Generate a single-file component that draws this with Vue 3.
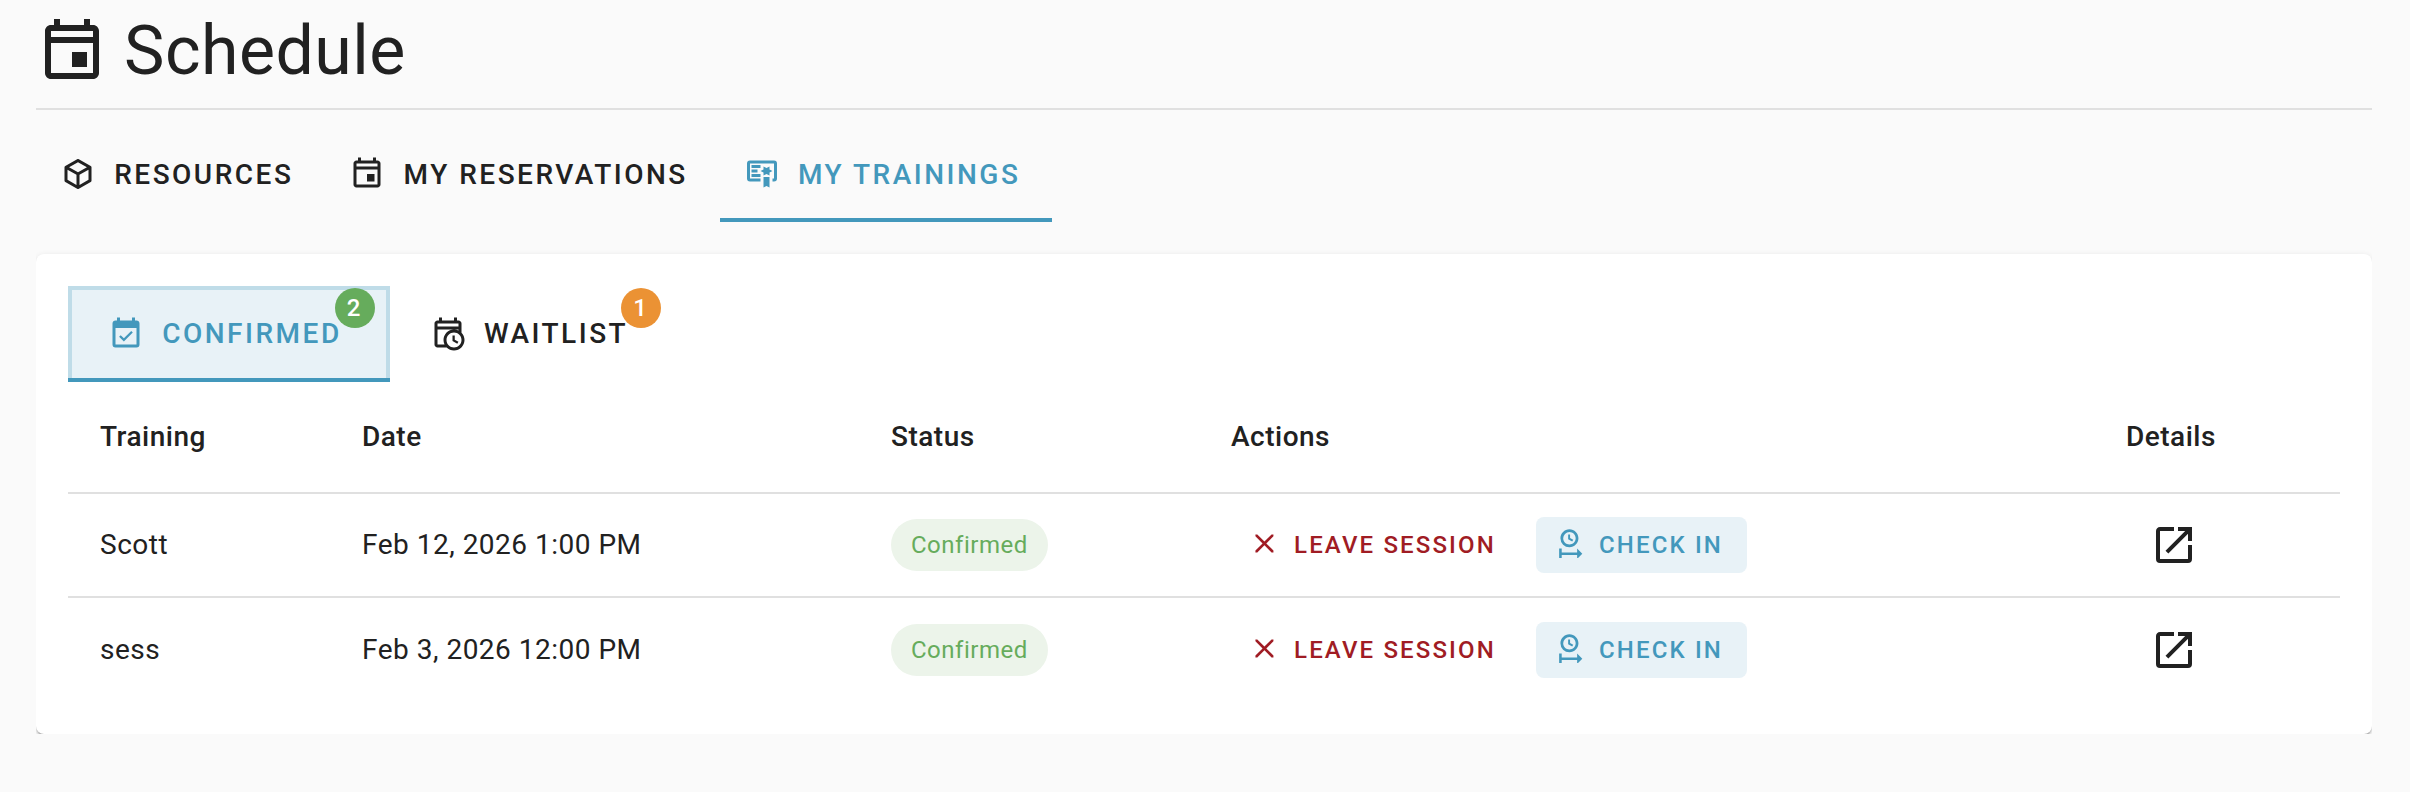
<template>
  <div class="page">
    <header class="page-header">
      <svg class="page-icon" viewBox="0 0 24 24"><path :d="icons.calendar" /></svg>
      <h1>Schedule</h1>
    </header>

    <nav class="tabs">
      <button v-for="tab in tabs" :key="tab.label" class="tab" :class="{ active: tab.active }">
        <svg viewBox="0 0 24 24"><path :d="icons[tab.icon]" /></svg>
        <span>{{ tab.label }}</span>
      </button>
    </nav>

    <div class="card-wrap">
      <section class="card">
        <div class="sub-tabs">
          <button
            v-for="tab in subTabs"
            :key="tab.label"
            class="tab sub-tab"
            :class="{ active: tab.active }"
          >
            <svg viewBox="0 0 24 24"><path :d="icons[tab.icon]" /></svg>
            <span class="badge-anchor">
              {{ tab.label }}
              <span class="badge" :class="tab.color">{{ tab.count }}</span>
            </span>
          </button>
        </div>

        <table>
          <colgroup>
            <col class="col-training" />
            <col class="col-date" />
            <col class="col-status" />
            <col class="col-actions" />
            <col class="col-details" />
          </colgroup>
          <thead>
            <tr>
              <th v-for="header in headers" :key="header">{{ header }}</th>
            </tr>
          </thead>
          <tbody>
            <tr v-for="item in trainings" :key="item.name">
              <td class="text-cell">{{ item.name }}</td>
              <td class="text-cell">{{ item.date }}</td>
              <td><span class="chip">{{ item.status }}</span></td>
              <td>
                <div class="actions">
                  <button class="btn btn-leave">
                    <svg viewBox="0 0 24 24"><path :d="icons.close" /></svg>
                    <span>LEAVE SESSION</span>
                  </button>
                  <button class="btn btn-checkin">
                    <svg viewBox="0 0 24 24"><path :d="icons.clockStart" /></svg>
                    <span>CHECK IN</span>
                  </button>
                </div>
              </td>
              <td>
                <button class="icon-btn" aria-label="Details">
                  <svg viewBox="0 0 24 24"><path :d="icons.openInNew" /></svg>
                </button>
              </td>
            </tr>
          </tbody>
        </table>
      </section>
    </div>
  </div>
</template>

<script setup>
const icons = {
  calendar: 'M12 12H17V17H12V12M19 3H18V1H16V3H8V1H6V3H5C3.89 3 3 3.9 3 5V19C3 20.1 3.89 21 5 21H19C20.11 21 21 20.1 21 19V5C21 3.9 20.11 3 19 3M19 5V7H5V5H19M5 19V9H19V19H5Z',
  cube: 'M21,16.5C21,16.88 20.79,17.21 20.47,17.38L12.57,21.82C12.41,21.94 12.21,22 12,22C11.79,22 11.59,21.94 11.43,21.82L3.53,17.38C3.21,17.21 3,16.88 3,16.5V7.5C3,7.12 3.21,6.79 3.53,6.62L11.43,2.18C11.59,2.06 11.79,2 12,2C12.21,2 12.41,2.06 12.57,2.18L20.47,6.62C20.79,6.79 21,7.12 21,7.5V16.5M12,4.15L6.04,7.5L12,10.85L17.96,7.5L12,4.15M5,15.91L11,19.29V12.58L5,9.21V15.91M19,15.91V9.21L13,12.58V19.29L19,15.91Z',
  certificate: 'M13 21L15 20L17 21V14H13M17 9V7L15 8L13 7V9L11 10L13 11V13L15 12L17 13V11L19 10M20 3H4A2 2 0 0 0 2 5V15A2 2 0 0 0 4 17H11V15H4V5H20V15H19V17H20A2 2 0 0 0 22 15V5A2 2 0 0 0 20 3M11 8H5V6H11M9 11H5V9H9M11 14H5V12H11Z',
  calendarCheck: 'M19,19H5V8H19M16,1V3H8V1H6V3H5C3.89,3 3,3.89 3,5V19A2,2 0 0,0 5,21H19A2,2 0 0,0 21,19V5C21,3.89 20.1,3 19,3H18V1M16.53,11.06L15.47,10L10.59,14.88L8.47,12.76L7.41,13.82L10.59,17L16.53,11.06Z',
  calendarClock: 'M15 13H16.5V15.82L18.94 17.23L18.19 18.53L15 16.69V13M23 16C23 19.87 19.87 23 16 23C14.09 23 12.37 22.24 11.11 21H5C3.9 21 3 20.11 3 19V5C3 3.9 3.9 3 5 3H6V1H8V3H16V1H18V3H19C20.1 3 21 3.9 21 5V11.11C22.24 12.37 23 14.09 23 16M5 7H19V5H5V7M9.67 19C9.24 18.09 9 17.07 9 16C9 12.13 12.13 9 16 9C17.07 9 18.09 9.24 19 9.67V9H5V19H9.67M21 16C21 13.24 18.76 11 16 11S11 13.24 11 16 13.24 21 16 21 21 18.76 21 16Z',
  close: 'M13.46,12L19,17.54V19H17.54L12,13.46L6.46,19H5V17.54L10.54,12L5,6.46V5H6.46L12,10.54L17.54,5H19V6.46L13.46,12Z',
  clockStart: 'M12 1C8.14 1 5 4.14 5 8A7 7 0 0 0 12 15C15.86 15 19 11.87 19 8C19 4.14 15.86 1 12 1M12 3.15C14.67 3.15 16.85 5.32 16.85 8S14.67 12.85 12 12.85 7.15 10.68 7.15 8A4.85 4.85 0 0 1 12 3.15M11 5V8.69L14.19 10.53L14.94 9.23L12.5 7.82V5M4 16V24H6V21H18V24L22 20L18 16V19H6V16',
  openInNew: 'M14,3V5H17.59L7.76,14.83L9.17,16.24L19,6.41V10H21V3M19,19H5V5H12V3H5C3.89,3 3,3.9 3,5V19A2,2 0 0,0 5,21H19A2,2 0 0,0 21,19V12H19V19Z'
}

const tabs = [
  { label: 'RESOURCES', icon: 'cube' },
  { label: 'MY RESERVATIONS', icon: 'calendar' },
  { label: 'MY TRAININGS', icon: 'certificate', active: true }
]

const subTabs = [
  { label: 'CONFIRMED', icon: 'calendarCheck', count: 2, color: 'success', active: true },
  { label: 'WAITLIST', icon: 'calendarClock', count: 1, color: 'warning' }
]

const headers = ['Training', 'Date', 'Status', 'Actions', 'Details']

const trainings = [
  { name: 'Scott', date: 'Feb 12, 2026 1:00 PM', status: 'Confirmed' },
  { name: 'sess', date: 'Feb 3, 2026 12:00 PM', status: 'Confirmed' }
]
</script>

<style>
body {
  background-color: #fafafa;
}
</style>

<style scoped>
.page {
  box-sizing: border-box;
  min-height: 792px;
  padding: 0 38px 0 36px;
  background-color: #fafafa;
  color: #212121;
  font-family: Roboto, "Liberation Sans", sans-serif;
  font-size: 28px;
}

svg {
  display: block;
  flex: none;
  fill: currentColor;
}

button {
  border: 0;
  padding: 0;
  background: none;
  color: inherit;
  font: inherit;
}

.page-header {
  box-sizing: border-box;
  display: flex;
  align-items: center;
  gap: 16px;
  height: 110px;
  padding-bottom: 4px;
  border-bottom: 2px solid #e0e0e0;
}

.page-icon {
  width: 72px;
  height: 72px;
}

h1 {
  margin: 0 0 2px;
  font-size: 68px;
  font-weight: 400;
  line-height: 80px;
  letter-spacing: 0.0073529412em;
}

.tabs {
  display: flex;
  margin-top: 16px;
}

.tab {
  box-sizing: border-box;
  display: flex;
  align-items: center;
  height: 96px;
  padding: 0 32px;
  font-weight: 500;
  letter-spacing: 0.0892857143em;
  white-space: nowrap;
}

.tab svg {
  width: 36px;
  height: 36px;
  margin: 0 18.2px 1px -8px;
}

.tab.active {
  color: #4398bc;
  box-shadow: inset 0 -4px #4398bc;
}

.card-wrap {
  margin-top: 22px;
  padding-top: 10px;
  overflow: hidden;
}

.card {
  padding: 32px;
  border-radius: 8px;
  background-color: #fff;
  box-shadow: 0 4px 2px -2px rgba(0, 0, 0, 0.2), 0 2px 2px rgba(0, 0, 0, 0.14), 0 2px 6px rgba(0, 0, 0, 0.12);
}

.sub-tabs {
  display: flex;
}

.sub-tab {
  padding: 0 48px;
}

.sub-tab.active {
  background-color: #e8f2f7;
  box-shadow: inset 0 -4px #4398bc, inset 0 0 0 4px #bfdce8;
}

.badge-anchor {
  position: relative;
  margin-bottom: 2px;
}

.badge {
  position: absolute;
  left: calc(100% - 7px);
  bottom: calc(100% - 11px);
  width: 40px;
  height: 40px;
  border-radius: 50%;
  color: #fff;
  font-size: 24px;
  line-height: 40px;
  text-align: center;
  letter-spacing: 0;
  text-indent: -2px;
}

.success {
  background-color: #66ac5c;
}

.warning {
  background-color: #eb9234;
}

table {
  width: 100%;
  table-layout: fixed;
  border-collapse: separate;
  border-spacing: 0;
  letter-spacing: 0.0178571429em;
}

.col-training {
  width: 262px;
}

.col-date {
  width: 529px;
}

.col-status {
  width: 340px;
}

.col-actions {
  width: 895px;
}

th,
td {
  box-sizing: border-box;
  height: 104px;
  padding: 0 32px;
  border-bottom: 2px solid #e0e0e0;
  text-align: left;
  vertical-align: middle;
}

th {
  height: 112px;
  padding-bottom: 2px;
  font-weight: 500;
}

.text-cell {
  padding-bottom: 2px;
}

tbody tr:last-child td {
  border-bottom: 0;
}

.chip {
  display: flex;
  align-items: center;
  width: fit-content;
  height: 52px;
  padding: 0 20px;
  border-radius: 26px;
  background-color: #ecf4ea;
  color: #66ac5c;
  font-size: 24px;
}

.actions {
  display: flex;
  gap: 16px;
}

.btn {
  display: flex;
  align-items: center;
  height: 56px;
  padding: 0 24px;
  border-radius: 8px;
  font-size: 24px;
  font-weight: 500;
  letter-spacing: 0.0892857143em;
  white-space: nowrap;
}

.btn svg {
  width: 30.86px;
  height: 30.86px;
  margin: 0 14.4px 4px -6.2px;
}

.btn-leave {
  color: #a01c24;
}

.btn-checkin {
  background-color: #e8f2f7;
  color: #4398bc;
}

.icon-btn {
  display: flex;
  align-items: center;
  justify-content: center;
  width: 96px;
  height: 96px;
}

.icon-btn svg {
  width: 48px;
  height: 48px;
}
</style>
